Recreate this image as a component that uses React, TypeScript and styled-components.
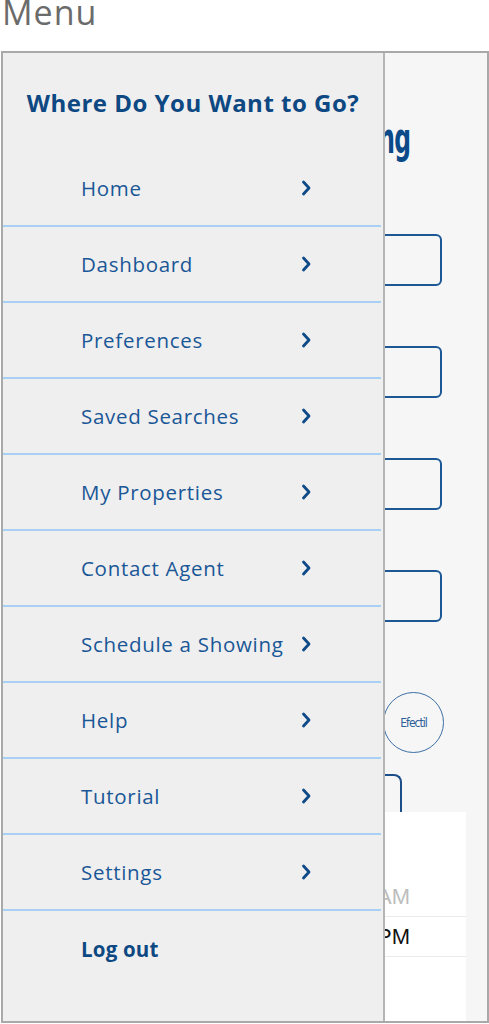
import React from "react";
import styled, { createGlobalStyle } from "styled-components";

const MENU_ITEMS = [
  "Home",
  "Dashboard",
  "Preferences",
  "Saved Searches",
  "My Properties",
  "Contact Agent",
  "Schedule a Showing",
  "Help",
  "Tutorial",
  "Settings",
];

const GlobalStyle = createGlobalStyle`
  html, body {
    margin: 0;
    padding: 0;
    background: #ffffff;
  }
  body {
    font-family: "Open Sans", "Noto Sans", sans-serif;
  }
`;

const Chevron = () => (
  <svg width="12" height="18" viewBox="0 0 12 18" fill="none">
    <polyline
      points="3.5,3 9,9 3.5,15"
      stroke="#0d4a87"
      strokeWidth="2.8"
      strokeLinecap="round"
      strokeLinejoin="round"
    />
  </svg>
);

const App = function App() {
  return (
    <>
      <GlobalStyle />
      <Style.Caption>Menu</Style.Caption>
      <Style.Frame>
        <Style.BackPage>
          <Style.Heading>Schedule a Showing</Style.Heading>
          <Style.Fields>
            {[0, 1, 2, 3].map((i) => (
              <Style.Field key={i} />
            ))}
          </Style.Fields>
          <Style.ContactRow>
            <Style.ContactCircle>Efectil</Style.ContactCircle>
          </Style.ContactRow>
          <Style.GhostButton />
          <Style.TimeCard>
            <Style.TimeRow $muted>AM</Style.TimeRow>
            <Style.TimeRow>PM</Style.TimeRow>
          </Style.TimeCard>
        </Style.BackPage>

        <Style.Drawer>
          <Style.DrawerTitle>Where Do You Want to Go?</Style.DrawerTitle>
          <Style.MenuList>
            {MENU_ITEMS.map((label) => (
              <Style.MenuItem key={label}>
                <Style.MenuLabel>{label}</Style.MenuLabel>
                <Chevron />
              </Style.MenuItem>
            ))}
            <Style.LogoutItem>
              <Style.MenuLabel $bold>Log out</Style.MenuLabel>
            </Style.LogoutItem>
          </Style.MenuList>
        </Style.Drawer>
      </Style.Frame>
    </>
  );
};

export default App;

const Style = {
  Caption: styled.div`
    height: 51px;
    padding: 0 0 0 2px;
    font-family: "Open Sans", "Noto Sans", sans-serif;
    font-size: 34px;
    line-height: 24px;
    color: #6b6b6b;
    letter-spacing: 1px;
  `,
  Frame: styled.div`
    position: relative;
    box-sizing: border-box;
    margin-left: 1px;
    width: 488px;
    height: 972px;
    border: 2px solid #a9a9a9;
    background: #f6f6f6;
    overflow: hidden;
  `,
  BackPage: styled.div`
    display: flex;
    flex-direction: column;
    align-items: flex-end;
    padding: 62px 0 0;
    height: 100%;
    box-sizing: border-box;
  `,
  Heading: styled.h1`
    margin: 0 77px 0 0;
    font-family: "DejaVu Sans Condensed", "DejaVu Sans", sans-serif;
    font-weight: 700;
    font-size: 42px;
    line-height: 48px;
    letter-spacing: -1px;
    color: #0b4a88;
    white-space: nowrap;
    transform: scaleX(0.62);
    transform-origin: right center;
  `,
  Fields: styled.div`
    display: flex;
    flex-direction: column;
    gap: 60px;
    margin: 71px 45px 0 0;
  `,
  Field: styled.div`
    width: 300px;
    height: 52px;
    box-sizing: border-box;
    border: 2px solid #1c5796;
    border-radius: 6px;
  `,
  ContactRow: styled.div`
    display: flex;
    margin: 70px 43px 0 0;
  `,
  ContactCircle: styled.div`
    width: 61px;
    height: 61px;
    box-sizing: border-box;
    border: 1.5px solid #3d6fa6;
    border-radius: 50%;
    display: flex;
    align-items: center;
    justify-content: center;
    font-family: "DejaVu Sans Condensed", "DejaVu Sans", sans-serif;
    font-size: 12px;
    letter-spacing: -1px;
    color: #2c5e98;
  `,
  GhostButton: styled.div`
    width: 200px;
    height: 38px;
    margin: 21px 85px 0 0;
    box-sizing: border-box;
    border: 2px solid #1c4f8a;
    border-bottom: none;
    border-radius: 8px 8px 0 0;
  `,
  TimeCard: styled.div`
    width: 200px;
    flex: 1;
    margin-right: 21px;
    background: #ffffff;
    padding-top: 65px;
  `,
  TimeRow: styled.div<{ $muted?: boolean }>`
    height: 40px;
    box-sizing: border-box;
    padding-right: 56px;
    display: flex;
    align-items: center;
    justify-content: flex-end;
    border-bottom: 1px solid #ebebeb;
    font-family: "Liberation Sans", Arial, sans-serif;
    font-size: 22px;
    color: ${({ $muted }) => ($muted ? "#bdbdbd" : "#111111")};
  `,
  Drawer: styled.nav`
    position: absolute;
    top: 0;
    left: 0;
    bottom: 0;
    width: 380px;
    background: #efefef;
    border-right: 2px solid #b5b5b5;
    display: flex;
    flex-direction: column;
  `,
  DrawerTitle: styled.h2`
    margin: 0;
    height: 98px;
    display: flex;
    align-items: center;
    justify-content: center;
    font-family: "Open Sans", "Noto Sans", sans-serif;
    font-weight: 700;
    font-size: 24px;
    letter-spacing: 0.5px;
    color: #0d4883;
    white-space: nowrap;
  `,
  MenuList: styled.ul`
    list-style: none;
    margin: 0;
    padding: 0;
    width: 378px;
  `,
  MenuItem: styled.li`
    height: 76px;
    box-sizing: border-box;
    display: flex;
    align-items: center;
    justify-content: space-between;
    padding: 0 69px 0 78px;
    border-bottom: 2px solid #a9d0f3;
  `,
  LogoutItem: styled.li`
    height: 76px;
    display: flex;
    align-items: center;
    padding-left: 78px;
  `,
  MenuLabel: styled.span<{ $bold?: boolean }>`
    font-family: "Open Sans", "Noto Sans", sans-serif;
    font-size: 20.5px;
    font-weight: ${({ $bold }) => ($bold ? 700 : 400)};
    color: ${({ $bold }) => ($bold ? "#0d4883" : "#1a5797")};
    letter-spacing: ${({ $bold }) => ($bold ? "0.2px" : "0.7px")};
  `,
};
